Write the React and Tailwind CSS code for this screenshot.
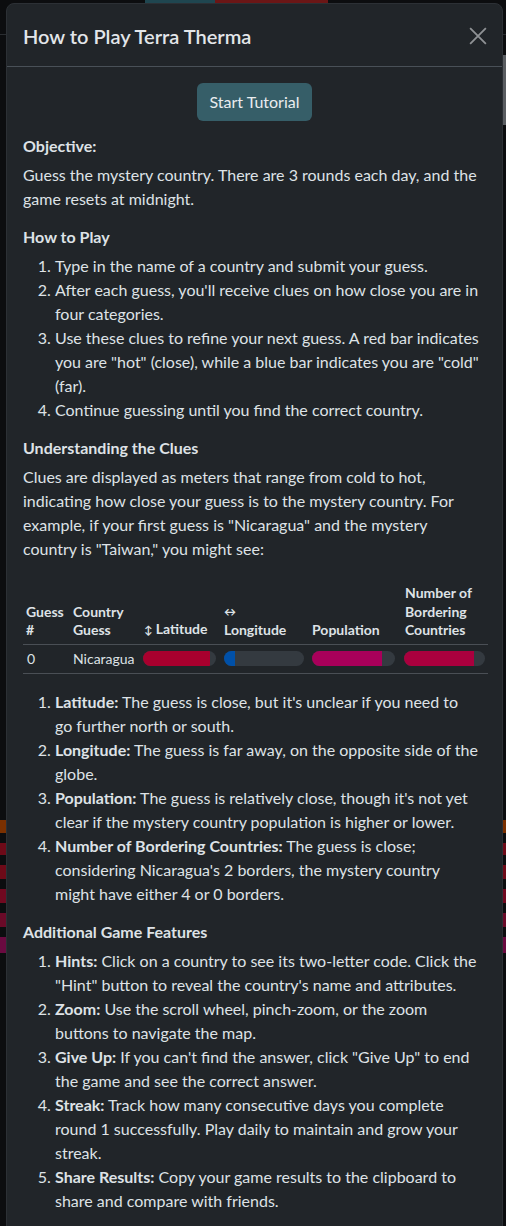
import React from 'react';

const font = { fontFamily: 'Lato, "Noto Sans", sans-serif' };

const clueRows = [
    { label: 'Latitude', text: <>The guess is close, but it's unclear if you need to<br />go further north or south.</> },
    { label: 'Longitude', text: 'The guess is far away, on the opposite side of the globe.' },
    { label: 'Population', text: "The guess is relatively close, though it's not yet clear if the mystery country population is higher or lower." },
    { label: 'Number of Bordering Countries', text: <>The guess is close; considering Nicaragua's 2 borders, the mystery country<br />might have either 4 or 0 borders.</> },
];

const features = [
    { label: 'Hints', text: 'Click on a country to see its two-letter code. Click the "Hint" button to reveal the country\'s name and attributes.' },
    { label: 'Zoom', text: <>Use the scroll wheel, pinch-zoom, or the zoom<br />buttons to navigate the map.</> },
    { label: 'Give Up', text: 'If you can\'t find the answer, click "Give Up" to end the game and see the correct answer.' },
    { label: 'Streak', text: 'Track how many consecutive days you complete round 1 successfully. Play daily to maintain and grow your streak.' },
    { label: 'Share Results', text: 'Copy your game results to the clipboard to share and compare with friends.' },
];

function Meter({ pct, color }) {
    return (
        <div className="h-[15px] w-full rounded-full bg-[#343a40] overflow-hidden">
            <div className={`h-full ${color}`} style={{ width: `${pct}%` }} />
        </div>
    );
}

function Heading({ children }) {
    return <h6 className="text-[16px] font-bold leading-[19px] mb-2 text-[#dee2e6]">{children}</h6>;
}

export default function App() {
    return (
        <div className="relative h-[1226px] overflow-hidden bg-[#0c0d0f]" style={font}>
            {/* page behind the modal */}
            <div className="flex flex-col">
                <div className="h-[3px] flex pl-[145px]">
                    <div className="w-[70px] bg-[#1f4650]" />
                    <div className="w-[113px] bg-[#6b1616]" />
                </div>
                <div className="h-[32px] border-b border-[#2a2d31]" />
                <div className="h-[785px]" />
                <div className="flex flex-col gap-[10px]">
                    <div className="h-[13px] bg-[#7a3000]" />
                    <div className="h-[12px] bg-[#6e0a18]" />
                    <div className="h-[14px] bg-[#6e0a18]" />
                    <div className="h-[14px] bg-[#700920]" />
                    <div className="h-[14px] bg-[#6a0a28]" />
                    <div className="h-[16px] bg-[#6a0a40]" />
                </div>
            </div>

            {/* modal */}
            <div className="absolute top-[3px] left-[6px] w-[497px] rounded-[8px] bg-[#212529] text-[#dee2e6] border border-[#2c3035]">
                <div className="h-[63px] flex items-center justify-between px-4 border-b border-[#495057]">
                    <h5 className="text-[20px] font-semibold leading-[24px] text-[#e3e6e9] mt-[2px]">How to Play Terra Therma</h5>
                    <button className="w-[18px] h-[18px] mr-[-1px] mt-[2px] text-[#8f9295]">
                        <svg viewBox="0 0 16 16" className="w-full h-full" fill="none" stroke="currentColor" strokeWidth="1.6">
                            <path d="M1 1 L15 15 M15 1 L1 15" />
                        </svg>
                    </button>
                </div>

                <div className="p-4 text-[16px] leading-[24px]">
                    <div className="flex justify-center">
                        <button className="h-[38px] px-[12px] rounded-[6px] bg-[#365e68] text-[#e9ecef] text-[16px]">Start Tutorial</button>
                    </div>

                    <div className="mt-[15px]">
                        <Heading>Objective:</Heading>
                        <p className="mb-4">Guess the mystery country. There are 3 rounds each day, and the game resets at midnight.</p>

                        <Heading>How to Play</Heading>
                        <ol className="list-decimal pl-8 mb-4">
                            <li>Type in the name of a country and submit your guess.</li>
                            <li>After each guess, you'll receive clues on how close you are in four categories.</li>
                            <li>Use these clues to refine your next guess. A red bar indicates you are "hot" (close), while a blue bar indicates you are "cold" (far).</li>
                            <li>Continue guessing until you find the correct country.</li>
                        </ol>

                        <Heading>Understanding the Clues</Heading>
                        <p className="mb-4">Clues are displayed as meters that range from cold to hot, indicating how close your guess is to the mystery country. For example, if your first guess is "Nicaragua" and the mystery<br />country is "Taiwan," you might see:</p>

                        <table className="w-[465px] table-fixed border-collapse text-[14px] mb-4">
                            <colgroup>
                                <col className="w-[46px]" />
                                <col className="w-[71px]" />
                                <col className="w-[80px]" />
                                <col className="w-[88px]" />
                                <col className="w-[93px]" />
                                <col className="w-[87px]" />
                            </colgroup>
                            <thead>
                                <tr className="border-b border-[#4a4f55] text-left align-bottom font-bold leading-[18.5px]">
                                    <th className="px-[3px] pt-[7px] pb-[4px]">Guess<br />#</th>
                                    <th className="px-[4px] pt-[7px] pb-[4px]">Country<br />Guess</th>
                                    <th className="px-[4px] pt-[7px] pb-[4px] whitespace-nowrap"><span className="text-[11px]">↕</span> Latitude</th>
                                    <th className="px-[4px] pt-[7px] pb-[4px]"><span className="text-[12px]">↔</span><br />Longitude</th>
                                    <th className="px-[4px] pt-[7px] pb-[4px]">Population</th>
                                    <th className="px-[4px] pt-[7px] pb-[4px]">Number of<br />Bordering<br />Countries</th>
                                </tr>
                            </thead>
                            <tbody>
                                <tr className="border-b border-[#4a4f55] h-[29px]">
                                    <td className="px-[4px]">0</td>
                                    <td className="px-[4px]">Nicaragua</td>
                                    <td className="pl-[3px] pr-[4px]"><Meter pct={92} color="bg-[#a8002e]" /></td>
                                    <td className="pl-[4px] pr-[4px]"><Meter pct={14} color="bg-[#0050a8]" /></td>
                                    <td className="pl-[4px] pr-[6px]"><Meter pct={84} color="bg-[#a8005a]" /></td>
                                    <td className="pl-[3px] pr-[3px]"><Meter pct={87} color="bg-[#aa003e]" /></td>
                                </tr>
                            </tbody>
                        </table>

                        <ol className="list-decimal pl-8 mb-4">
                            {clueRows.map((r) => (
                                <li key={r.label}><span className="font-bold">{r.label}:</span> {r.text}</li>
                            ))}
                        </ol>

                        <Heading>Additional Game Features</Heading>
                        <ol className="list-decimal pl-8 mb-4">
                            {features.map((f) => (
                                <li key={f.label}><span className="font-bold">{f.label}:</span> {f.text}</li>
                            ))}
                        </ol>
                    </div>
                </div>
            </div>

            {/* page scrollbar */}
            <div className="absolute top-[55px] right-0 w-[3px] h-[70px] bg-[#5a5d61]" />
        </div>
    );
}
